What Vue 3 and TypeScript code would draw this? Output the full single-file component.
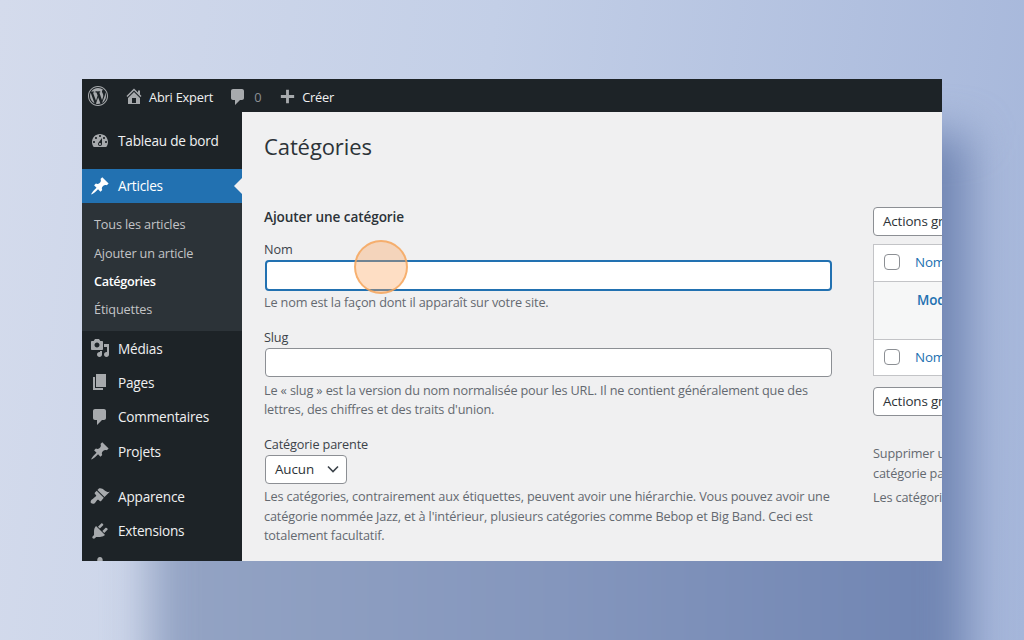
<script setup lang="ts">
interface MenuItem { label: string; d: string; gapBefore?: boolean }
const pin = 'M10.44 3.02l1.82-1.82 6.36 6.35-1.83 1.82c-1.05-.68-2.48-.57-3.41.36l-.75.75c-.92.93-1.04 2.35-.35 3.41l-1.83 1.82-2.41-2.41-2.8 2.79c-.42.42-3.38 2.71-3.8 2.29s1.86-3.39 2.28-3.81l2.79-2.79L4.1 9.36l1.83-1.82c1.05.69 2.48.57 3.4-.36l.75-.75c.93-.92 1.05-2.35.36-3.41z'
const comment = 'M5 2h9c1.1 0 2 .9 2 2v7c0 1.1-.9 2-2 2h-2l-5 5v-5H5c-1.1 0-2-.9-2-2V4c0-1.1.9-2 2-2z'
const home = 'M16 8.5l1.53 1.53-1.06 1.06L10 4.62l-6.47 6.47-1.06-1.06L10 2.5l4 4v-2h2v4zm-6-2.46l6 5.99V18H4v-5.97zM12 17v-5H8v5h4z'
const plus = 'M17 8.5v3h-5.5V17h-3v-5.5H3v-3h5.5V3h3v5.5z'
const wp = 'M20 10c0-5.52-4.48-10-10-10S0 4.48 0 10s4.48 10 10 10 10-4.48 10-10zM10 1.01c4.97 0 8.99 4.02 8.99 8.99s-4.02 8.99-8.99 8.99S1.01 14.97 1.01 10 5.03 1.01 10 1.01zM8.01 14.82L4.96 6.61c.49-.03 1.05-.08 1.05-.08.43-.05.38-1.01-.06-.99 0 0-1.29.1-2.13.1-.15 0-.33 0-.52-.01 1.44-2.17 3.9-3.6 6.7-3.6 2.09 0 3.99.79 5.41 2.09-.6-.08-1.45.35-1.45 1.42 0 .66.38 1.22.79 1.88.31.54.5 1.22.5 2.21 0 1.34-1.27 4.48-1.27 4.48l-2.71-7.5c.48-.03.75-.16.75-.16.43-.05.38-1.1-.05-1.08 0 0-1.3.11-2.14.11-.78 0-2.11-.11-2.11-.11-.43-.02-.48 1.06-.05 1.08l.84.08 1.12 3.04zm6.02 2.15L16.64 10s.67-1.69.39-3.81c.63 1.14.94 2.42.94 3.81 0 2.96-1.56 5.58-3.94 6.97zM2.68 6.77L6.5 17.25c-2.67-1.3-4.47-4.08-4.47-7.25 0-1.16.2-2.23.65-3.23zm7.45 4.53l2.29 6.25c-.75.27-1.57.42-2.42.42-.72 0-1.41-.11-2.06-.3z'
const dashboard = 'M3.76 16h12.48c1.1-1.37 1.76-3.11 1.76-5 0-4.42-3.58-8-8-8s-8 3.58-8 8c0 1.89.66 3.63 1.76 5zM10 4c.55 0 1 .45 1 1s-.45 1-1 1-1-.45-1-1 .45-1 1-1zM6 6c.55 0 1 .45 1 1s-.45 1-1 1-1-.45-1-1 .45-1 1-1zm8 0c.55 0 1 .45 1 1s-.45 1-1 1-1-.45-1-1 .45-1 1-1zm-5.37 5.55L12 7v6c0 1.1-.9 2-2 2s-2-.9-2-2c0-.57.24-1.08.63-1.45zM4 10c.55 0 1 .45 1 1s-.45 1-1 1-1-.45-1-1 .45-1 1-1zm12 0c.55 0 1 .45 1 1s-.45 1-1 1-1-.45-1-1 .45-1 1-1zm-5 3c0-.55-.45-1-1-1s-1 .45-1 1 .45 1 1 1 1-.45 1-1z'
const upper: MenuItem[] = [
  { label: 'Médias', d: 'M13 11V4c0-.55-.45-1-1-1h-1.67L9 1H5L3.67 3H2c-.55 0-1 .45-1 1v7c0 .55.45 1 1 1h10c.55 0 1-.45 1-1zM7 4.5c1.38 0 2.5 1.12 2.5 2.5S8.38 9.5 7 9.5 4.5 8.38 4.5 7 5.62 4.5 7 4.5zM14 6h5v10.5c0 1.38-1.12 2.5-2.5 2.5S14 17.88 14 16.5s1.12-2.5 2.5-2.5c.17 0 .34.02.5.05V9h-3V6zm-4 8.05V13h2v3.5c0 1.38-1.12 2.5-2.5 2.5S7 17.88 7 16.5 8.12 14 9.5 14c.17 0 .34.02.5.05z' },
  { label: 'Pages', d: 'M6 15V2h10v13H6zm-1 1h8v2H3V5h2v11z' },
  { label: 'Commentaires', d: comment },
  { label: 'Projets', d: pin },
  { label: 'Apparence', gapBefore: true, d: 'M14.48 11.06L7.41 3.99l1.5-1.5c.5-.56 2.3-.47 3.51.32 1.21.8 1.43 1.28 2.91 2.1 1.18.64 2.45 1.26 4.45.85zm-.71.71L6.7 4.7 4.93 6.47c-.39.39-.39 1.02 0 1.41l1.06 1.06c.39.39.39 1.03 0 1.42-.6.6-1.43 1.11-2.21 1.69-.35.26-.7.53-1.01.84C1.43 13.23.5 15 .6 16.29c.2 1.14 2.4 2.1 4.13.89.31-.31.58-.66.84-1.01.58-.78 1.09-1.61 1.69-2.21.39-.39 1.02-.39 1.41 0l1.06 1.06c.39.39 1.03.39 1.42 0z' },
  { label: 'Extensions', d: 'M13.11 4.36L9.87 7.6 8 5.73l3.24-3.24c.35-.34 1.05-.2 1.56.32.52.51.66 1.21.31 1.55zm-8 1.77l.91-1.12 9.01 9.01-1.19.84c-.71.71-2.63 1.16-3.82 1.16H6.14L4.9 17.26c-.59.59-1.54.59-2.12 0-.59-.58-.59-1.53 0-2.12l1.24-1.24v-3.88c0-1.13.4-3.19 1.09-3.89zm7.26 3.97l3.24-3.24c.34-.35 1.04-.21 1.55.31.52.51.66 1.21.31 1.55l-3.24 3.25z' },
  { label: 'Comptes', d: 'M10 9.25c-2.27 0-2.73-3.44-2.73-3.44C7 4.02 7.82 2 9.97 2c2.16 0 2.98 2.02 2.71 3.81 0 0-.41 3.44-2.68 3.44zm0 2.57L12.72 10c2.39 0 4.52 2.33 4.52 4.53v2.49s-3.65 1.13-7.24 1.13c-3.65 0-7.24-1.13-7.24-1.13v-2.49c0-2.25 1.94-4.48 4.47-4.48z' },
]
const subs = ['Tous les articles', 'Ajouter un article', 'Catégories', 'Étiquettes']
</script>

<template>
  <div class="page">
    <div class="window">
      <header class="bar">
        <svg class="logo" viewBox="0 0 20 20"><path :d="wp" /></svg>
        <svg class="bar-home" viewBox="0 0 20 20"><path :d="home" /></svg>
        <span class="bar-text site">Abri Expert</span>
        <svg class="bar-comment" viewBox="0 0 20 20"><path :d="comment" /></svg>
        <span class="bar-zero">0</span>
        <svg class="bar-plus" viewBox="0 0 20 20"><path :d="plus" /></svg>
        <span class="bar-text">Créer</span>
      </header>
      <div class="body">
        <nav class="side">
          <a class="item first">
            <svg viewBox="0 0 20 20"><path :d="dashboard" /></svg>
            <span>Tableau de bord</span>
          </a>
          <a class="item active">
            <svg viewBox="0 0 20 20"><path :d="pin" /></svg>
            <span>Articles</span>
          </a>
          <ul class="sub">
            <li v-for="(s, i) in subs" :key="s" :class="{ current: i === 2 }">{{ s }}</li>
          </ul>
          <a v-for="m in upper" :key="m.label" class="item" :class="{ gap: m.gapBefore }">
            <svg viewBox="0 0 20 20"><path :d="m.d" /></svg>
            <span>{{ m.label }}</span>
          </a>
        </nav>
        <main class="main">
          <h1>Catégories</h1>
          <div class="cols">
            <section class="left">
              <h2>Ajouter une catégorie</h2>
              <label class="lbl">Nom</label>
              <div class="input focus"></div>
              <p class="help one">Le nom est la façon dont il apparaît sur votre site.</p>
              <label class="lbl slug">Slug</label>
              <div class="input"></div>
              <p class="help two">Le « slug » est la version du nom normalisée pour les URL. Il ne contient généralement que des lettres, des chiffres et des traits d'union.</p>
              <label class="lbl parent">Catégorie parente</label>
              <div class="select">
                <span>Aucun</span>
                <svg viewBox="0 0 14 14"><path d="M2 4.5l5 5 5-5" /></svg>
              </div>
              <p class="help three">Les catégories, contrairement aux étiquettes, peuvent avoir une hiérarchie. Vous pouvez avoir une catégorie nommée Jazz, et à l'intérieur, plusieurs catégories comme Bebop et Big Band. Ceci est totalement facultatif.</p>
            </section>
            <section class="right">
              <div class="bulk">Actions groupées</div>
              <div class="table">
                <div class="row head"><i class="cb"></i><a>Nom</a></div>
                <div class="row empty"><b>Modifier</b></div>
                <div class="row foot"><i class="cb"></i><a>Nom</a></div>
              </div>
              <div class="bulk second">Actions groupées</div>
              <p class="note n1">Supprimer une catégorie ne supprime pas les articles de cette catégorie par défaut.</p>
              <p class="note n2">Les catégories peuvent être converties</p>
            </section>
          </div>
        </main>
      </div>
      <div class="pointer"></div>
    </div>
  </div>
</template>

<style scoped>
.page {
  position: relative;
  width: 1024px;
  height: 640px;
  overflow: hidden;
  padding: 79px 0 0 82px;
  box-sizing: border-box;
  background: linear-gradient(97deg, #d4dbec 0%, #c3cfe7 45%, #a5b6da 100%);
  font-family: "Open Sans", "Noto Sans", sans-serif;
}
.page::before {
  content: "";
  position: absolute;
  left: 150px;
  top: 135px;
  width: 818px;
  height: 620px;
  background: linear-gradient(90deg, #94a4c4 0%, #8496bd 50%, #6f84b2 100%);
  filter: blur(22px);
}
.window {
  position: relative;
  z-index: 1;
  width: 860px;
  height: 482px;
  overflow: hidden;
  display: flex;
  flex-direction: column;
  background: #f0f0f1;
}
.bar {
  height: 33px;
  flex: none;
  display: flex;
  align-items: center;
  background: #1d2327;
  color: #f0f0f1;
  font-size: 12.8px;
  letter-spacing: -.2px;
}
.bar span { position: relative; top: 1px; }
.bar svg { fill: #a7aaad; flex: none; }
.logo { width: 20px; height: 20px; margin-left: 6px; }
.bar-home { width: 20px; height: 20px; margin-left: 16px; }
.site { margin-left: 5px; }
.bar-comment { width: 20px; height: 20px; margin-left: 15px; margin-top: 2px; }
.bar-zero { margin-left: 6px; color: #8c8f94; width: 9px; }
.bar-plus { width: 19px; height: 19px; margin-left: 15px; margin-top: 1px; }
.bar-plus + .bar-text { margin-left: 5px; }
.body { flex: 1; display: flex; min-height: 0; }
.side {
  width: 160px;
  flex: none;
  background: #1d2327;
  color: #f0f0f1;
  overflow: hidden;
  padding-top: 12px;
  box-sizing: border-box;
  font-size: 13.6px;
  letter-spacing: -.2px;
}
.item {
  height: 34.4px;
  display: flex;
  align-items: center;
  position: relative;
}
.item span { margin-top: -1px; }
.item svg { width: 20px; height: 20px; margin-left: 8px; margin-right: 8px; margin-top: -1px; fill: #a7aaad; flex: none; }
.item.first { margin-bottom: 10.6px; }
.item.gap { margin-top: 10.6px; }
.active { background: #2271b1; color: #fff; }
.active svg { fill: #fff; }
.active::after {
  content: "";
  position: absolute;
  right: 0;
  top: 50%;
  margin-top: -8px;
  border: 8px solid transparent;
  border-right-color: #f0f0f1;
  border-left-width: 0;
}
.sub {
  list-style: none;
  margin: 0;
  padding: 7px 0 0;
  background: #2c3338;
  color: #c3c4c7;
  font-size: 12.7px;
  letter-spacing: -.15px;
  height: 128px;
  box-sizing: border-box;
}
.sub li { height: 28.3px; line-height: 28.3px; padding-left: 12px; }
.sub .current { color: #fff; font-weight: 600; letter-spacing: -.35px; }
.main {
  flex: 1;
  min-width: 0;
  padding-left: 22px;
  color: #3c434a;
  font-size: 12.7px;
  letter-spacing: -.15px;
  overflow: hidden;
}
h1 {
  margin: 19px 0 0;
  font-size: 22px;
  line-height: 30px;
  font-weight: 400;
  color: #2c3338;
  letter-spacing: -.1px;
}
.cols { display: flex; margin-top: 46px; }
.left { width: 568px; flex: none; }
h2 {
  margin: 0;
  font-size: 13.6px;
  line-height: 20px;
  font-weight: 600;
  color: #2c3338;
  letter-spacing: -.1px;
}
.lbl { display: block; line-height: 18px; }
.left h2 + .lbl { margin-top: 13px; }
.input {
  margin-left: 1px;
  width: 565px;
  background: #fff;
  border: 1px solid #8c8f94;
  border-radius: 4px;
  box-sizing: content-box;
  height: 27px;
}
.focus { border: 2px solid #2271b1; width: 563px; margin-top: 2px; height: 27px; }
.help { margin: 0; color: #646970; line-height: 19.4px; }
.help.one { margin-top: 2px; }
.lbl.slug { margin-top: 16px; }
.lbl.slug + .input { margin-top: 2px; }
.help.two { margin-top: 3.5px; }
.lbl.parent { margin-top: 15px; }
.select {
  margin: 2px 0 0 1px;
  width: 82px;
  height: 29px;
  box-sizing: border-box;
  border: 1px solid #8c8f94;
  border-radius: 4px;
  background: #fff;
  display: flex;
  align-items: center;
  justify-content: space-between;
  padding: 0 6px 0 9px;
  color: #2c3338;
  font-size: 13.4px;
  letter-spacing: -.1px;
}
.select svg { width: 14px; height: 14px; fill: none; stroke: #3c434a; stroke-width: 1.6; }
.help.three { margin-top: 3.5px; }
.right { margin-left: 41px; width: 400px; flex: none; }
.bulk {
  width: 300px;
  height: 29px;
  box-sizing: border-box;
  border: 1px solid #8c8f94;
  border-radius: 4px;
  background: #fff;
  padding-left: 9px;
  line-height: 27px;
  font-size: 13.4px;
  color: #2c3338;
}
.table {
  margin-top: 8px;
  width: 400px;
  border: 1px solid #c3c4c7;
  background: #fff;
  box-sizing: border-box;
  height: 132px;
  display: flex;
  flex-direction: column;
}
.row { display: flex; align-items: center; color: #2271b1; }
.row a { font-size: 13.4px; margin-left: 15px; }
.cb {
  width: 16px;
  height: 16px;
  margin-left: 10px;
  box-sizing: border-box;
  border: 1px solid #8c8f94;
  border-radius: 4px;
  background: #fff;
  flex: none;
}
.head { height: 37px; border-bottom: 1px solid #c3c4c7; padding-bottom: 2px; box-sizing: border-box; }
.empty { height: 57px; background: #f6f7f7; align-items: flex-start; padding: 8px 0 0 43px; box-sizing: border-box; font-size: 13.4px; line-height: 20px; }
.empty b { font-weight: 600; }
.foot { flex: 1; border-top: 1px solid #c3c4c7; padding-bottom: 2px; }
.second { margin-top: 11px; }
.note { margin: 0; color: #646970; line-height: 20px; width: 400px; }
.n1 { margin-top: 27px; }
.n2 { margin-top: 4px; }
.pointer {
  position: absolute;
  left: 272px;
  top: 161px;
  width: 54px;
  height: 54px;
  box-sizing: border-box;
  border-radius: 50%;
  background: rgba(251, 164, 92, .36);
  border: 2px solid rgba(245, 165, 90, .8);
}
</style>

<style>
html, body { margin: 0; }
</style>
